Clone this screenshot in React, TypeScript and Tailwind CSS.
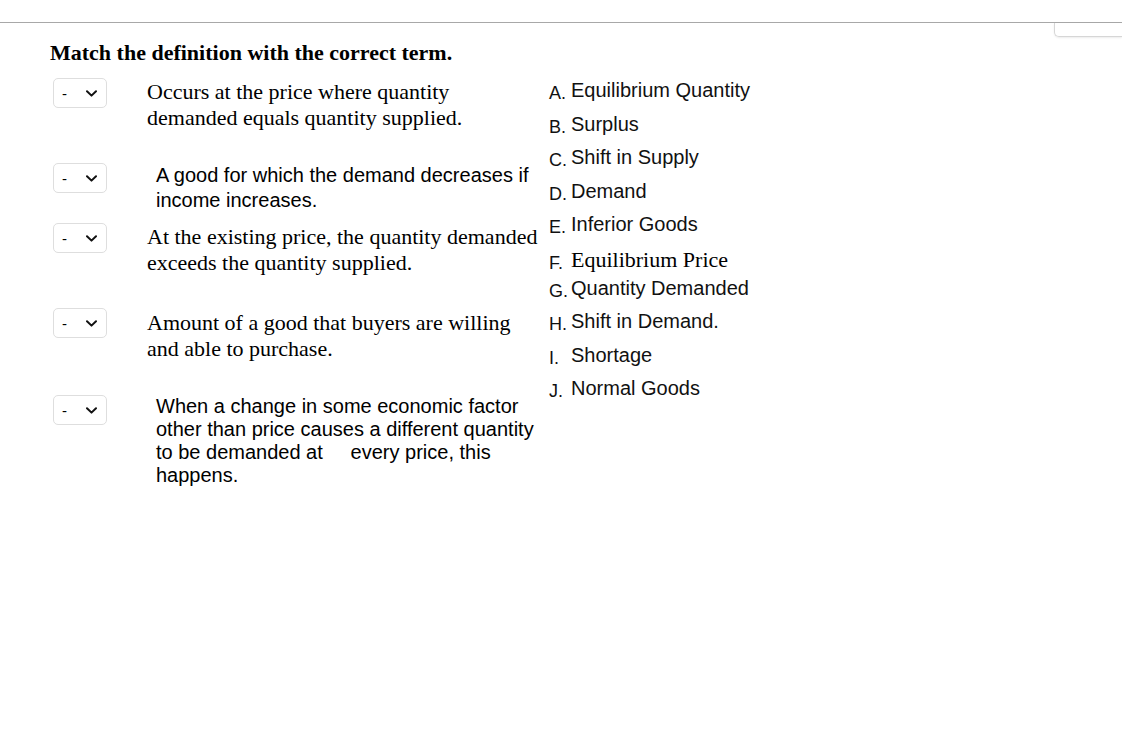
import React from "react";

const serif = { fontFamily: '"Liberation Serif", "Times New Roman", serif' };
const sans = { fontFamily: '"Liberation Sans", Arial, sans-serif' };

function Select() {
  return (
    <div
      className="w-[54px] h-[30px] shrink-0 border border-[#dedede] rounded-[5px] bg-white flex items-center justify-between pl-[8px] pr-[9px] text-[15px] text-black"
      style={sans}
    >
      <span className="leading-none">-</span>
      <svg width="11" height="7" viewBox="0 0 11 7" fill="none">
        <path d="M1 1.2 L5.5 5.6 L10 1.2" stroke="#111" strokeWidth="2" strokeLinecap="round" strokeLinejoin="round" />
      </svg>
    </div>
  );
}

type Row = { text: string; kind: "serif" | "sans"; h: string; mt: string };

const rows: Row[] = [
  { text: "Occurs at the price where quantity demanded equals quantity supplied.", kind: "serif", h: "h-[85px]", mt: "mt-[1px]" },
  { text: "A good for which the demand decreases if income increases.", kind: "sans", h: "h-[60px]", mt: "mt-0" },
  { text: "At the existing price, the quantity demanded exceeds the quantity supplied.", kind: "serif", h: "h-[85px]", mt: "mt-[1px]" },
  { text: "Amount of a good that buyers are willing and able to purchase.", kind: "serif", h: "h-[87px]", mt: "mt-[2px]" },
  {
    text: "When a change in some economic factor other than price causes a different quantity to be demanded at\u00a0\u00a0\u00a0\u00a0 every price, this happens.",
    kind: "sans",
    h: "h-[100px]",
    mt: "mt-0",
  },
];

const terms: { l: string; t: string; h: string; serif?: boolean }[] = [
  { l: "A.", t: "Equilibrium Quantity", h: "h-[34px]" },
  { l: "B.", t: "Surplus", h: "h-[33px]" },
  { l: "C.", t: "Shift in Supply", h: "h-[34px]" },
  { l: "D.", t: "Demand", h: "h-[33px]" },
  { l: "E.", t: "Inferior Goods", h: "h-[35px]" },
  { l: "F.", t: "Equilibrium Price", h: "h-[29px]", serif: true },
  { l: "G.", t: "Quantity Demanded", h: "h-[33px]" },
  { l: "H.", t: "Shift in Demand.", h: "h-[34px]" },
  { l: "I.", t: "Shortage", h: "h-[33px]" },
  { l: "J.", t: "Normal Goods", h: "h-[33px]" },
];

export default function App() {
  return (
    <div className="w-[1122px] h-[755px] bg-white text-black overflow-hidden">
      <div className="h-[22px]" />
      <div className="border-t border-[#a8a8a8] flex justify-end">
        <div className="w-[68px] h-[14px] border-l border-b border-[#d6d6d6] rounded-bl-[5px] shadow-[0_1px_2px_rgba(0,0,0,0.08)]" />
      </div>
      <h1 className="mt-[3px] pl-[50px] text-[22px] font-bold leading-[25px]" style={serif}>
        Match the definition with the correct term.
      </h1>
      <div className="mt-[9px] pl-[53px] flex">
        <div className="w-[496px] pt-[4px] flex flex-col">
          {rows.map((r, i) => (
            <div key={i} className={`flex items-start ${r.h}`}>
              <Select />
              {r.kind === "serif" ? (
                <p className={`ml-[40px] w-[393px] text-[22px] leading-[26px] ${r.mt}`} style={serif}>
                  {r.text}
                </p>
              ) : (
                <p
                  className={`ml-[49px] w-[380px] text-[20px] ${i === 1 ? "leading-[25px]" : "leading-[23px]"} ${r.mt}`}
                  style={sans}
                >
                  {r.text}
                </p>
              )}
            </div>
          ))}
        </div>
        <div className="flex flex-col">
          {terms.map((t) => (
            <div key={t.l} className={`flex items-baseline leading-[33px] ${t.h}`}>
              <span className="w-[22px] shrink-0 text-[18px] text-[#111] translate-y-[2px]" style={sans}>
                {t.l}
              </span>
              <span
                className={t.serif ? "text-[22px] text-black" : "text-[20px] text-[#111]"}
                style={t.serif ? serif : sans}
              >
                {t.t}
              </span>
            </div>
          ))}
        </div>
      </div>
    </div>
  );
}
